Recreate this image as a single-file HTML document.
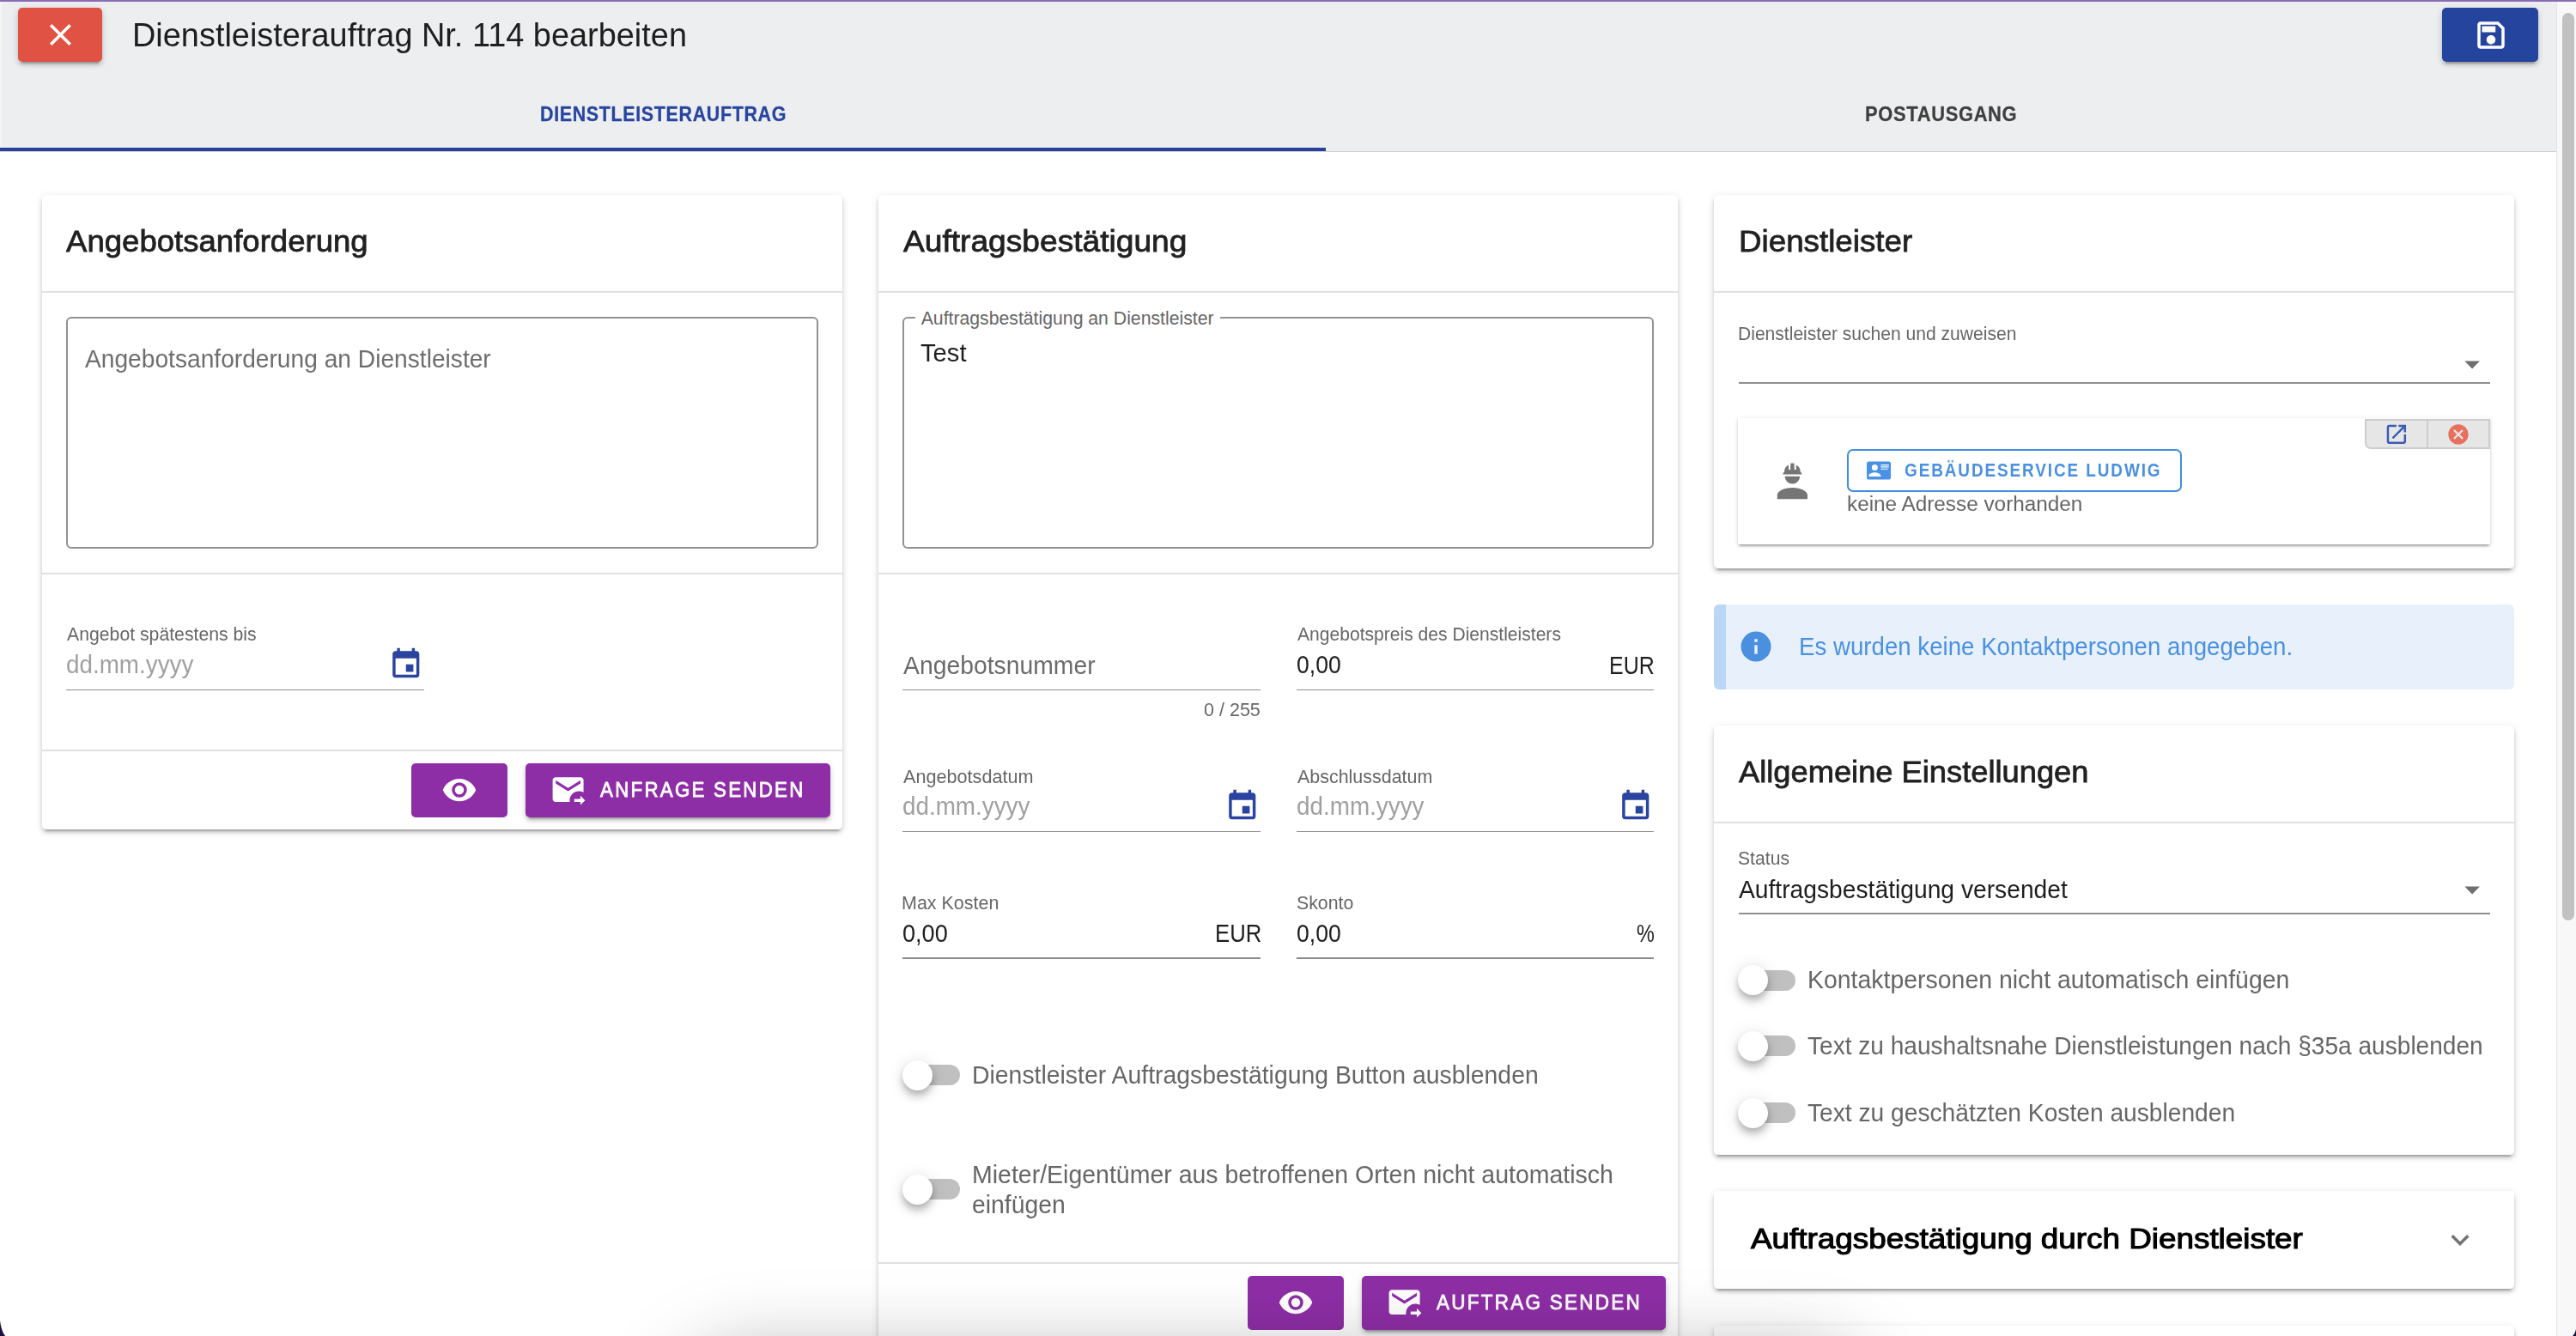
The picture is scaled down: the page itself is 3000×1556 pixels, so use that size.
<!DOCTYPE html><html><head><meta charset="utf-8"><style>
html,body{margin:0;padding:0}body{width:3000px;height:1556px;overflow:hidden;background:#fff;position:relative;font-family:"Liberation Sans",sans-serif}
.a{position:absolute}.t{position:absolute;white-space:pre;transform-origin:0 0}
</style></head><body>
<div class="a" style="left:0px;top:0px;width:3000px;height:2px;background:#8a6cb4"></div>
<div class="a" style="left:0px;top:2px;width:2977px;height:174px;background:#edeef0"></div>
<div class="a" style="left:0px;top:2px;width:2px;height:174px;background:#f4f5f7"></div>
<div class="a" style="left:0px;top:176px;width:2977px;height:1px;background:#cfd0d2"></div>
<div class="a" style="left:0px;top:172px;width:1544px;height:4px;background:#2a409d"></div>
<div class="a" style="left:2977px;top:2px;width:23px;height:1554px;background:#f8f8f8;border-left:1px solid #e4e4e4;box-sizing:border-box"></div>
<div class="a" style="left:2984px;top:15px;width:14px;height:1057px;background:#c1c1c1;border-radius:7px"></div>
<div class="a" style="left:21px;top:9px;width:98px;height:63px;background:#e05243;border-radius:5px;box-shadow:0 6px 2px -4px rgba(0,0,0,.2),0 4px 4px 0 rgba(0,0,0,.14),0 2px 10px 0 rgba(0,0,0,.12);"></div>
<svg class="a" style="left:49.07px;top:19.07px;width:42.86px;height:42.86px;" viewBox="0 0 24 24"><path fill="#ffffff" d="M19,6.41L17.59,5L12,10.59L6.41,5L5,6.41L10.59,12L5,17.59L6.41,19L12,13.41L17.59,19L19,17.59L13.41,12L19,6.41Z"/></svg>
<div class="a" style="left:2844px;top:9px;width:112px;height:63px;background:#25449e;border-radius:5px;box-shadow:0 6px 2px -4px rgba(0,0,0,.2),0 4px 4px 0 rgba(0,0,0,.14),0 2px 10px 0 rgba(0,0,0,.12);"></div>
<svg class="a" style="left:2879.75px;top:19.75px;width:42.00px;height:42.00px;" viewBox="0 0 24 24"><path fill="#ffffff" d="M17 3H5C3.89 3 3 3.9 3 5V19C3 20.1 3.89 21 5 21H19C20.1 21 21 20.1 21 19V7L17 3M19 19H5V5H16.17L19 7.83V19M12 12C10.34 12 9 13.34 9 15S10.34 18 12 18 15 16.66 15 15 13.66 12 12 12M6 6H15V10H6V6Z"/></svg>
<div class="a" style="left:49px;top:227px;width:932px;height:739px;background:#fff;border-radius:5px;box-shadow:0 6px 2px -4px rgba(0,0,0,.2),0 4px 4px 0 rgba(0,0,0,.14),0 2px 10px 0 rgba(0,0,0,.12);"></div>
<div class="a" style="left:1023px;top:227px;width:931px;height:1473px;background:#fff;border-radius:5px;box-shadow:0 6px 2px -4px rgba(0,0,0,.2),0 4px 4px 0 rgba(0,0,0,.14),0 2px 10px 0 rgba(0,0,0,.12);"></div>
<div class="a" style="left:1996px;top:227px;width:932px;height:435px;background:#fff;border-radius:5px;box-shadow:0 6px 2px -4px rgba(0,0,0,.2),0 4px 4px 0 rgba(0,0,0,.14),0 2px 10px 0 rgba(0,0,0,.12);"></div>
<div class="a" style="left:1996px;top:845px;width:932px;height:500px;background:#fff;border-radius:5px;box-shadow:0 6px 2px -4px rgba(0,0,0,.2),0 4px 4px 0 rgba(0,0,0,.14),0 2px 10px 0 rgba(0,0,0,.12);"></div>
<div class="a" style="left:1996px;top:1387px;width:932px;height:114px;background:#fff;border-radius:5px;box-shadow:0 6px 2px -4px rgba(0,0,0,.2),0 4px 4px 0 rgba(0,0,0,.14),0 2px 10px 0 rgba(0,0,0,.12);"></div>
<div class="a" style="left:1996px;top:1544px;width:932px;height:156px;background:#fff;border-radius:5px;box-shadow:0 6px 2px -4px rgba(0,0,0,.2),0 4px 4px 0 rgba(0,0,0,.14),0 2px 10px 0 rgba(0,0,0,.12);"></div>
<div class="a" style="left:49px;top:339px;width:932px;height:2px;background:#e0e0e0"></div>
<div class="a" style="left:1023px;top:339px;width:931px;height:2px;background:#e0e0e0"></div>
<div class="a" style="left:1996px;top:339px;width:932px;height:2px;background:#e0e0e0"></div>
<div class="a" style="left:49px;top:667px;width:932px;height:2px;background:#e0e0e0"></div>
<div class="a" style="left:1023px;top:667px;width:931px;height:2px;background:#e0e0e0"></div>
<div class="a" style="left:49px;top:873px;width:932px;height:2px;background:#e0e0e0"></div>
<div class="a" style="left:1023px;top:1470px;width:931px;height:2px;background:#e0e0e0"></div>
<div class="a" style="left:1996px;top:957px;width:932px;height:2px;background:#e0e0e0"></div>
<div class="a" style="left:77px;top:369px;width:876px;height:270px;border:2px solid #929292;border-radius:6px;box-sizing:border-box"></div>
<div class="a" style="left:1051px;top:369px;width:875px;height:270px;border:2px solid #929292;border-radius:6px;box-sizing:border-box"></div>
<div class="a" style="left:1066px;top:360px;width:355px;height:20px;background:#fff"></div>
<div class="a" style="left:77px;top:803px;width:417px;height:1px;background:#8f8f8f"></div>
<div class="a" style="left:1051px;top:803px;width:417px;height:1px;background:#8f8f8f"></div>
<div class="a" style="left:1510px;top:803px;width:416px;height:1px;background:#8f8f8f"></div>
<div class="a" style="left:1051px;top:968px;width:417px;height:1px;background:#8f8f8f"></div>
<div class="a" style="left:1510px;top:968px;width:416px;height:1px;background:#8f8f8f"></div>
<div class="a" style="left:1051px;top:1115px;width:417px;height:2px;background:#8a8a8a"></div>
<div class="a" style="left:1510px;top:1115px;width:416px;height:2px;background:#8a8a8a"></div>
<div class="a" style="left:2025px;top:445px;width:875px;height:2px;background:#8f8f8f"></div>
<div class="a" style="left:2025px;top:1063px;width:875px;height:2px;background:#8f8f8f"></div>
<svg class="a" style="left:451.91px;top:753.17px;width:41.52px;height:41.52px;" viewBox="0 0 24 24"><path fill="#2a44a0" d="M19,19H5V8H19M16,1V3H8V1H6V3H5C3.89,3 3,3.89 3,5V19A2,2 0 0,0 5,21H19A2,2 0 0,0 21,19V5C21,3.89 20.1,3 19,3H18V1M17,12H12V17H17V12Z"/></svg>
<svg class="a" style="left:1425.81px;top:917.77px;width:41.52px;height:41.52px;" viewBox="0 0 24 24"><path fill="#2a44a0" d="M19,19H5V8H19M16,1V3H8V1H6V3H5C3.89,3 3,3.89 3,5V19A2,2 0 0,0 5,21H19A2,2 0 0,0 21,19V5C21,3.89 20.1,3 19,3H18V1M17,12H12V17H17V12Z"/></svg>
<svg class="a" style="left:1883.81px;top:917.77px;width:41.52px;height:41.52px;" viewBox="0 0 24 24"><path fill="#2a44a0" d="M19,19H5V8H19M16,1V3H8V1H6V3H5C3.89,3 3,3.89 3,5V19A2,2 0 0,0 5,21H19A2,2 0 0,0 21,19V5C21,3.89 20.1,3 19,3H18V1M17,12H12V17H17V12Z"/></svg>
<div class="a" style="left:479px;top:889px;width:112px;height:63px;background:#8e2ea6;border-radius:5px;"></div>
<div class="a" style="left:612px;top:889px;width:355px;height:63px;background:#8e2ea6;border-radius:5px;box-shadow:0 6px 2px -4px rgba(0,0,0,.2),0 4px 4px 0 rgba(0,0,0,.14),0 2px 10px 0 rgba(0,0,0,.12);"></div>
<svg class="a" style="left:513.75px;top:898.83px;width:42.00px;height:42.00px;" viewBox="0 0 24 24"><path fill="#fff" d="M12,9A3,3 0 0,0 9,12A3,3 0 0,0 12,15A3,3 0 0,0 15,12A3,3 0 0,0 12,9M12,17A5,5 0 0,1 7,12A5,5 0 0,1 12,7A5,5 0 0,1 17,12A5,5 0 0,1 12,17M12,4.5C7,4.5 2.73,7.61 1,12C2.73,16.39 7,19.5 12,19.5C17,19.5 21.27,16.39 23,12C21.27,7.61 17,4.5 12,4.5Z"/></svg>
<svg class="a" style="left:640.00px;top:898.30px;width:43.20px;height:43.20px;" viewBox="0 0 24 24"><path fill="#fff" d="M13 19C13 15.69 15.69 13 19 13C20.1 13 21.12 13.3 22 13.81V6C22 4.89 21.1 4 20 4H4C2.89 4 2 4.89 2 6V18C2 19.11 2.9 20 4 20H13.09C13.04 19.67 13 19.34 13 19M4 8V6L12 11L20 6V8L12 13L4 8M20 22V20H16V18H20V16L23 19L20 22Z"/></svg>
<div class="a" style="left:1453px;top:1486px;width:112px;height:63px;background:#8e2ea6;border-radius:5px;"></div>
<div class="a" style="left:1586px;top:1486px;width:354px;height:63px;background:#8e2ea6;border-radius:5px;box-shadow:0 6px 2px -4px rgba(0,0,0,.2),0 4px 4px 0 rgba(0,0,0,.14),0 2px 10px 0 rgba(0,0,0,.12);"></div>
<svg class="a" style="left:1487.75px;top:1495.83px;width:42.00px;height:42.00px;" viewBox="0 0 24 24"><path fill="#fff" d="M12,9A3,3 0 0,0 9,12A3,3 0 0,0 12,15A3,3 0 0,0 15,12A3,3 0 0,0 12,9M12,17A5,5 0 0,1 7,12A5,5 0 0,1 12,7A5,5 0 0,1 17,12A5,5 0 0,1 12,17M12,4.5C7,4.5 2.73,7.61 1,12C2.73,16.39 7,19.5 12,19.5C17,19.5 21.27,16.39 23,12C21.27,7.61 17,4.5 12,4.5Z"/></svg>
<svg class="a" style="left:1613.80px;top:1495.30px;width:43.20px;height:43.20px;" viewBox="0 0 24 24"><path fill="#fff" d="M13 19C13 15.69 15.69 13 19 13C20.1 13 21.12 13.3 22 13.81V6C22 4.89 21.1 4 20 4H4C2.89 4 2 4.89 2 6V18C2 19.11 2.9 20 4 20H13.09C13.04 19.67 13 19.34 13 19M4 8V6L12 11L20 6V8L12 13L4 8M20 22V20H16V18H20V16L23 19L20 22Z"/></svg>
<div class="a" style="left:1052px;top:1240px;width:66px;height:24px;background:#c0c0c0;border-radius:12px"></div>
<div class="a" style="left:1050.5px;top:1234.5px;width:35.0px;height:35.0px;background:#ffffff;border-radius:50%;box-shadow:0 4px 8px -2px rgba(0,0,0,.2),0 8px 10px 0 rgba(0,0,0,.14),0 2px 20px 0 rgba(0,0,0,.12)"></div>
<div class="a" style="left:1052px;top:1373px;width:66px;height:24px;background:#c0c0c0;border-radius:12px"></div>
<div class="a" style="left:1050.5px;top:1367.5px;width:35.0px;height:35.0px;background:#ffffff;border-radius:50%;box-shadow:0 4px 8px -2px rgba(0,0,0,.2),0 8px 10px 0 rgba(0,0,0,.14),0 2px 20px 0 rgba(0,0,0,.12)"></div>
<div class="a" style="left:2025.3px;top:1129.5px;width:66.00000000000023px;height:24.0px;background:#c0c0c0;border-radius:12px"></div>
<div class="a" style="left:2023.8px;top:1124.0px;width:35.00000000000023px;height:35.0px;background:#ffffff;border-radius:50%;box-shadow:0 4px 8px -2px rgba(0,0,0,.2),0 8px 10px 0 rgba(0,0,0,.14),0 2px 20px 0 rgba(0,0,0,.12)"></div>
<div class="a" style="left:2025.3px;top:1206.4px;width:66.00000000000023px;height:24.0px;background:#c0c0c0;border-radius:12px"></div>
<div class="a" style="left:2023.8px;top:1200.9px;width:35.00000000000023px;height:35.0px;background:#ffffff;border-radius:50%;box-shadow:0 4px 8px -2px rgba(0,0,0,.2),0 8px 10px 0 rgba(0,0,0,.14),0 2px 20px 0 rgba(0,0,0,.12)"></div>
<div class="a" style="left:2025.3px;top:1284px;width:66.00000000000023px;height:24px;background:#c0c0c0;border-radius:12px"></div>
<div class="a" style="left:2023.8px;top:1278.5px;width:35.00000000000023px;height:35.0px;background:#ffffff;border-radius:50%;box-shadow:0 4px 8px -2px rgba(0,0,0,.2),0 8px 10px 0 rgba(0,0,0,.14),0 2px 20px 0 rgba(0,0,0,.12)"></div>
<svg class="a" style="left:2857.68px;top:402.90px;width:42.24px;height:42.24px;" viewBox="0 0 24 24"><path fill="#6f6f6f" d="M7,10L12,15L17,10H7Z"/></svg>
<svg class="a" style="left:2857.68px;top:1014.90px;width:42.24px;height:42.24px;" viewBox="0 0 24 24"><path fill="#6f6f6f" d="M7,10L12,15L17,10H7Z"/></svg>
<div class="a" style="left:2024px;top:487px;width:876px;height:147px;background:#fff;box-shadow:0 4px 2px -2px rgba(0,0,0,.2),0 2px 3px 0 rgba(0,0,0,.14),0 1px 6px 0 rgba(0,0,0,.10)"></div>
<div class="a" style="left:2754px;top:488px;width:146px;height:35px;background:#e6e6e6;border:2px solid #cdcdcd;border-bottom-left-radius:7px;box-sizing:border-box"></div>
<div class="a" style="left:2826px;top:488px;width:2px;height:35px;background:#cdcdcd"></div>
<svg class="a" style="left:2775.98px;top:491.28px;width:29.76px;height:29.76px;" viewBox="0 0 24 24"><path fill="#3a5cb5" d="M14,3V5H17.59L7.76,14.83L9.17,16.24L19,6.41V10H21V3M19,19H5V5H12V3H5C3.89,3 3,3.9 3,5V19A2,2 0 0,0 5,21H19A2,2 0 0,0 21,19V12H19V19Z"/></svg>
<svg class="a" style="left:2849.17px;top:491.67px;width:27.96px;height:27.96px;" viewBox="0 0 24 24"><path fill="#e8705f" d="M12,2C17.53,2 22,6.47 22,12C22,17.53 17.53,22 12,22C6.47,22 2,17.53 2,12C2,6.47 6.47,2 12,2M15.59,7L12,10.59L8.41,7L7,8.41L10.59,12L7,15.59L8.41,17L12,13.41L15.59,17L17,15.59L13.41,12L17,8.41L15.59,7Z"/></svg>
<svg class="a" style="left:2061.20px;top:534.60px;width:52.80px;height:52.80px;" viewBox="0 0 24 24"><path fill="#757575" d="M12,15C7.58,15 4,16.79 4,19V21H20V19C20,16.79 16.42,15 12,15M8,9A4,4 0 0,0 12,13A4,4 0 0,0 16,9M11.5,2C11.2,2 11,2.21 11,2.5V5.5H10V3C10,3 7.75,3.86 7.75,6.75C7.75,6.75 7,6.89 7,8H17C16.95,6.89 16.25,6.75 16.25,6.75C16.25,3.86 14,3 14,3V5.5H13V2.5C13,2.21 12.81,2 12.5,2H11.5Z"/></svg>
<div class="a" style="left:2151px;top:523px;width:390px;height:50px;border:2px solid #3f8ee0;border-radius:7px;box-sizing:border-box"></div>
<svg class="a" style="left:2174.00px;top:533.59px;width:28.08px;height:28.08px;" viewBox="0 0 24 24"><path fill="#4a92e6" d="M2,3H22C23.05,3 24,3.95 24,5V19C24,20.05 23.05,21 22,21H2C0.95,21 0,20.05 0,19V5C0,3.95 0.95,3 2,3M14,6V7H22V6H14M14,8V9H21.5L22,9V8H14M14,10V11H21V10H14M8,13.91C6,13.91 2,15 2,17V18H14V17C14,15 10,13.91 8,13.91M8,6A3,3 0 0,0 5,9A3,3 0 0,0 8,12A3,3 0 0,0 11,9A3,3 0 0,0 8,6Z"/></svg>
<div class="a" style="left:1996px;top:704px;width:932px;height:99px;background:#e8f1fb;border-radius:6px;overflow:hidden"></div>
<div class="a" style="left:1996px;top:704px;width:14px;height:99px;background:#bcd6f5;border-radius:6px 0 0 6px"></div>
<svg class="a" style="left:2024.20px;top:732.00px;width:42.00px;height:42.00px;" viewBox="0 0 24 24"><path fill="#4a8fe0" d="M13,9H11V7H13M13,17H11V11H13M12,2A10,10 0 0,0 2,12A10,10 0 0,0 12,22A10,10 0 0,0 22,12A10,10 0 0,0 12,2Z"/></svg>
<svg class="a" style="left:2843.50px;top:1422.78px;width:42.00px;height:42.00px;" viewBox="0 0 24 24"><path fill="#737373" d="M7.41,8.58L12,13.17L16.59,8.58L18,10L12,16L6,10L7.41,8.58Z"/></svg>
<div class="t" style="left:153.90px;top:21.00px;font-size:39.24px;line-height:39.24px;font-weight:400;color:#1e1e1e;transform:scaleX(0.9658);">Dienstleisterauftrag Nr. 114 bearbeiten</div>
<div class="t" style="left:629.08px;top:122.00px;font-size:23.43px;line-height:23.43px;font-weight:700;-webkit-text-stroke:0.28px #2845a0;color:#2845a0;letter-spacing:0.703px;transform:scaleX(0.9161);">DIENSTLEISTERAUFTRAG</div>
<div class="t" style="left:2172.06px;top:122.00px;font-size:23.43px;line-height:23.43px;font-weight:700;-webkit-text-stroke:0.28px #3f3f3f;color:#3f3f3f;letter-spacing:0.703px;transform:scaleX(0.9358);">POSTAUSGANG</div>
<div class="t" style="left:77.20px;top:263.90px;font-size:34.51px;line-height:34.51px;font-weight:400;-webkit-text-stroke:0.76px #212121;color:#212121;transform:scaleX(1.0597);">Angebotsanforderung</div>
<div class="t" style="left:1051.60px;top:264.00px;font-size:34.51px;line-height:34.51px;font-weight:400;-webkit-text-stroke:0.76px #212121;color:#212121;transform:scaleX(1.0767);">Auftragsbestätigung</div>
<div class="t" style="left:2024.97px;top:264.00px;font-size:34.51px;line-height:34.51px;font-weight:400;-webkit-text-stroke:0.76px #212121;color:#212121;transform:scaleX(1.0649);">Dienstleister</div>
<div class="t" style="left:2024.80px;top:881.80px;font-size:34.51px;line-height:34.51px;font-weight:400;-webkit-text-stroke:0.76px #212121;color:#212121;transform:scaleX(1.0518);">Allgemeine Einstellungen</div>
<div class="t" style="left:2039.00px;top:1424.80px;font-size:34.03px;line-height:34.03px;font-weight:400;-webkit-text-stroke:1.09px #000000;color:#000000;transform:scaleX(1.0828);">Auftragsbestätigung durch Dienstleister</div>
<div class="t" style="left:99.00px;top:404.00px;font-size:29.07px;line-height:29.07px;font-weight:400;color:#6e6e6e;transform:scaleX(0.9689);">Angebotsanforderung an Dienstleister</div>
<div class="t" style="left:77.60px;top:728.00px;font-size:21.8px;line-height:21.8px;font-weight:400;color:#666666;transform:scaleX(0.9739);">Angebot spätestens bis</div>
<div class="t" style="left:76.64px;top:760.00px;font-size:29.07px;line-height:29.07px;font-weight:400;color:#a0a0a0;transform:scaleX(0.9571);">dd.mm.yyyy</div>
<div class="t" style="left:699.00px;top:908.00px;font-size:24.58px;line-height:24.58px;font-weight:400;-webkit-text-stroke:0.79px #ffffff;color:#ffffff;letter-spacing:2.458px;transform:scaleX(0.9089);">ANFRAGE SENDEN</div>
<div class="t" style="left:1072.70px;top:359.80px;font-size:21.22px;line-height:21.22px;font-weight:400;color:#666666;">Auftragsbestätigung an Dienstleister</div>
<div class="t" style="left:1071.80px;top:396.90px;font-size:29.07px;line-height:29.07px;font-weight:400;color:#1e1e1e;transform:scaleX(1.0038);">Test</div>
<div class="t" style="left:1051.60px;top:760.80px;font-size:29.07px;line-height:29.07px;font-weight:400;color:#6b6b6b;transform:scaleX(0.9747);">Angebotsnummer</div>
<div class="t" style="left:1401.51px;top:815.70px;font-size:21.8px;line-height:21.8px;font-weight:400;color:#666666;transform:scaleX(0.9877);">0 / 255</div>
<div class="t" style="left:1510.50px;top:728.00px;font-size:21.8px;line-height:21.8px;font-weight:400;color:#666666;transform:scaleX(0.9669);">Angebotspreis des Dienstleisters</div>
<div class="t" style="left:1509.79px;top:760.00px;font-size:29.07px;line-height:29.07px;font-weight:400;color:#1e1e1e;transform:scaleX(0.9145);">0,00</div>
<div class="t" style="left:1874.28px;top:760.80px;font-size:29.07px;line-height:29.07px;font-weight:400;color:#1e1e1e;transform:scaleX(0.8586);">EUR</div>
<div class="t" style="left:1051.60px;top:893.70px;font-size:21.8px;line-height:21.8px;font-weight:400;color:#666666;transform:scaleX(0.9926);">Angebotsdatum</div>
<div class="t" style="left:1050.64px;top:924.60px;font-size:29.07px;line-height:29.07px;font-weight:400;color:#a0a0a0;transform:scaleX(0.9571);">dd.mm.yyyy</div>
<div class="t" style="left:1510.50px;top:893.70px;font-size:21.8px;line-height:21.8px;font-weight:400;color:#666666;transform:scaleX(0.9838);">Abschlussdatum</div>
<div class="t" style="left:1509.54px;top:924.60px;font-size:29.07px;line-height:29.07px;font-weight:400;color:#a0a0a0;transform:scaleX(0.9578);">dd.mm.yyyy</div>
<div class="t" style="left:1049.63px;top:1040.50px;font-size:21.8px;line-height:21.8px;font-weight:400;color:#666666;transform:scaleX(0.9846);">Max Kosten</div>
<div class="t" style="left:1050.67px;top:1072.50px;font-size:29.07px;line-height:29.07px;font-weight:400;color:#1e1e1e;transform:scaleX(0.9322);">0,00</div>
<div class="t" style="left:1414.77px;top:1072.50px;font-size:29.07px;line-height:29.07px;font-weight:400;color:#1e1e1e;transform:scaleX(0.8838);">EUR</div>
<div class="t" style="left:1509.52px;top:1040.50px;font-size:21.8px;line-height:21.8px;font-weight:400;color:#666666;transform:scaleX(0.9761);">Skonto</div>
<div class="t" style="left:1509.79px;top:1072.50px;font-size:29.07px;line-height:29.07px;font-weight:400;color:#1e1e1e;transform:scaleX(0.9145);">0,00</div>
<div class="t" style="left:1905.64px;top:1072.50px;font-size:29.07px;line-height:29.07px;font-weight:400;color:#1e1e1e;transform:scaleX(0.8065);">%</div>
<div class="t" style="left:1131.90px;top:1237.40px;font-size:29.94px;line-height:29.94px;font-weight:400;color:#666666;transform:scaleX(0.9483);">Dienstleister Auftragsbestätigung Button ausblenden</div>
<div class="t" style="left:1131.90px;top:1352.90px;font-size:29.94px;line-height:29.94px;font-weight:400;color:#666666;transform:scaleX(0.9516);">Mieter/Eigentümer aus betroffenen Orten nicht automatisch</div>
<div class="t" style="left:1132.45px;top:1387.60px;font-size:29.94px;line-height:29.94px;font-weight:400;color:#666666;transform:scaleX(0.9475);">einfügen</div>
<div class="t" style="left:1673.30px;top:1505.30px;font-size:24.58px;line-height:24.58px;font-weight:400;-webkit-text-stroke:0.79px #ffffff;color:#ffffff;letter-spacing:2.458px;transform:scaleX(0.9152);">AUFTRAG SENDEN</div>
<div class="t" style="left:2023.97px;top:377.90px;font-size:21.8px;line-height:21.8px;font-weight:400;color:#666666;transform:scaleX(0.9666);">Dienstleister suchen und zuweisen</div>
<div class="t" style="left:2217.81px;top:538.20px;font-size:21.37px;line-height:21.37px;font-weight:700;color:#4a90e2;letter-spacing:2.137px;transform:scaleX(0.8871);">GEBÄUDESERVICE LUDWIG</div>
<div class="t" style="left:2150.97px;top:574.80px;font-size:23.98px;line-height:23.98px;font-weight:400;color:#666666;transform:scaleX(1.0142);">keine Adresse vorhanden</div>
<div class="t" style="left:2094.97px;top:738.90px;font-size:28.63px;line-height:28.63px;font-weight:400;color:#4a90e2;transform:scaleX(0.9662);">Es wurden keine Kontaktpersonen angegeben.</div>
<div class="t" style="left:2024.43px;top:989.00px;font-size:21.8px;line-height:21.8px;font-weight:400;color:#666666;transform:scaleX(0.9708);">Status</div>
<div class="t" style="left:2025.40px;top:1022.00px;font-size:29.07px;line-height:29.07px;font-weight:400;color:#1e1e1e;transform:scaleX(0.9711);">Auftragsbestätigung versendet</div>
<div class="t" style="left:2105.40px;top:1126.00px;font-size:29.94px;line-height:29.94px;font-weight:400;color:#666666;transform:scaleX(0.9501);">Kontaktpersonen nicht automatisch einfügen</div>
<div class="t" style="left:2105.06px;top:1203.00px;font-size:29.94px;line-height:29.94px;font-weight:400;color:#666666;transform:scaleX(0.9378);">Text zu haushaltsnahe Dienstleistungen nach §35a ausblenden</div>
<div class="t" style="left:2105.06px;top:1280.70px;font-size:29.94px;line-height:29.94px;font-weight:400;color:#666666;transform:scaleX(0.9411);">Text zu geschätzten Kosten ausblenden</div>
<div class="a" style="left:790px;top:1576px;width:1390px;height:160px;background:rgba(0,0,0,.30);border-radius:90px;filter:blur(45px)"></div>
<svg class="a" style="left:0;top:1530px;width:12px;height:26px" viewBox="0 0 12 26"><path fill="#1d1040" d="M0,8 C1,16 3,22 6,26 L0,26 Z"/></svg>
<svg class="a" style="left:2990px;top:1544px;width:10px;height:12px" viewBox="0 0 10 12"><path fill="#1d1040" d="M10,4 C9,8 8,10 6,12 L10,12 Z"/></svg>
</body></html>
